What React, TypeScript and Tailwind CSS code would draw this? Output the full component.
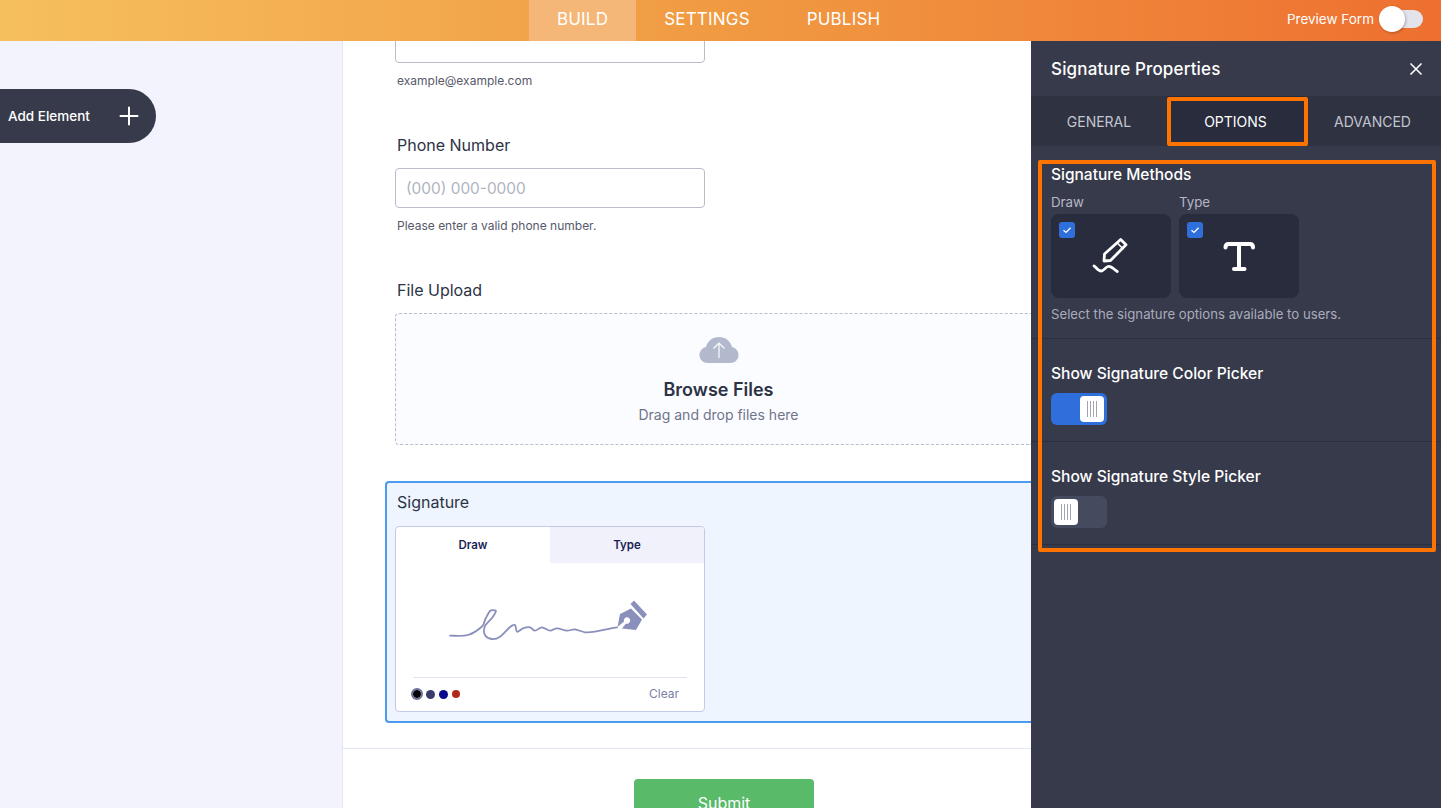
import React from "react";

function Grip() {
  return (
    <span className="flex gap-[2px]">
      <span className="w-px h-[16px] bg-[#a0a4b4]" />
      <span className="w-px h-[16px] bg-[#a0a4b4]" />
      <span className="w-px h-[16px] bg-[#a0a4b4]" />
      <span className="w-px h-[16px] bg-[#a0a4b4]" />
    </span>
  );
}

function Check() {
  return (
    <span className="flex items-center justify-center w-[16px] h-[16px] rounded-[3px] bg-[#2f6fdc]">
      <svg width="10" height="10" viewBox="0 0 10 10" fill="none">
        <path d="M1.5 5.2 4 7.4 8.6 2.8" stroke="#fff" strokeWidth="1.3" />
      </svg>
    </span>
  );
}

function PencilIcon() {
  return (
    <svg width="40" height="40" viewBox="0 0 40 40" fill="none" stroke="#fff" strokeWidth="2.800" strokeLinecap="round" strokeLinejoin="round">
      <path d="M29.700 3.500 35 8.800 19.500 24.500 13 25 13.500 18Z" />
      <path d="M26 6.800 32 12.800" strokeWidth="1.500" />
      <path d="M3 30C5 31 7 35 10 35 13 35 14.500 31 17 30.500 20 29.500 23 33.500 26.300 35.500" />
    </svg>
  );
}

function TIcon() {
  return (
    <svg width="40" height="40" viewBox="0 0 40 40" fill="none" stroke="#fff" strokeWidth="4" strokeLinecap="round" strokeLinejoin="round">
      <path d="M6.500 11.500Q6.500 8 9.500 8H31Q34 8 34 11.500" />
      <path d="M20 8V33" />
      <path d="M15 33H25.500" />
    </svg>
  );
}

const strokePoints: [number, number][] = [
  [15, 45.7], [33, 45], [47, 36.5], [50, 30], [55, 21], [60, 20.5], [60.7, 22], [57, 28], [50, 36], [50, 45],
  [57, 49], [65, 46.7], [75, 37], [80, 35], [82, 41.7], [88, 38.3], [95, 37.3], [100, 40.7], [107, 37.3],
  [115, 40.7], [122, 38.3], [132, 40.7], [140, 39.3], [150, 42.3], [160, 41.7], [182, 37.3],
];

function smoothPath(p: [number, number][]) {
  let d = `M${p[0][0]} ${p[0][1]}`;
  for (let i = 0; i < p.length - 1; i++) {
    const a = p[Math.max(i - 1, 0)];
    const b = p[i];
    const c = p[i + 1];
    const e = p[Math.min(i + 2, p.length - 1)];
    d += `C${b[0] + (c[0] - a[0]) / 6} ${b[1] + (c[1] - a[1]) / 6} ${c[0] - (e[0] - b[0]) / 6} ${c[1] - (e[1] - b[1]) / 6} ${c[0]} ${c[1]}`;
  }
  return d;
}

function SignatureDrawing() {
  return (
    <svg width="225" height="60" viewBox="0 0 225 60" fill="none">
      <path d={smoothPath(strokePoints)} stroke="#8a90bb" strokeWidth="1.800" strokeLinecap="round" />
      <path
        fillRule="evenodd"
        d="M182.500 37 185 24 196 18.500 207 29.500 201 40 187 38.500 191 33.500A3.200 3.200 0 1 0 189 31.500Z"
        fill="#8a90bb"
      />
      <path d="M199 10.500 212 24.500 208.500 28.500 195.500 14Z" fill="#8a90bb" />
    </svg>
  );
}

function CloudIcon() {
  return (
    <svg width="40" height="28" viewBox="0 0 40 28" fill="none">
      <path
        d="M9 27C4 27 0.500 23.500 0.500 19 0.500 15 3 12 7 11 8.500 5 13.500 1 20 1 26.500 1 31.500 5 33 11 37 12 39.500 15 39.500 19 39.500 23.500 36 27 31 27Z"
        fill="#b2b9cc"
      />
      <path d="M20 22V7M14.500 12.500 20 7 25.500 12.500" stroke="#fcfcff" strokeWidth="1.200" />
    </svg>
  );
}

export default function App() {
  return (
    <div className="h-[808px] w-full flex flex-col overflow-hidden font-['Inter',sans-serif] bg-[#f3f3fe]">
      <header className="h-[41px] shrink-0 relative flex items-center justify-center bg-gradient-to-r from-[#f6bf5d] via-[#f09a42] to-[#ee6f30]">
        <nav className="flex h-full text-[17px] text-white tracking-[0.2px] mr-[3px]">
          <div className="w-[107px] flex items-center justify-center pb-[1px] bg-[#f4b777]">BUILD</div>
          <div className="w-[142px] flex items-center justify-center pb-[1px]">SETTINGS</div>
          <div className="w-[131px] flex items-center justify-center pb-[1px]">PUBLISH</div>
        </nav>
        <div className="absolute right-[18px] top-[10px] flex items-center gap-[5px]">
          <span className="text-[13.500px] leading-[18px] text-white">Preview Form</span>
          <span className="relative w-[44px] h-[18px] rounded-full bg-[#e2e3eb]">
            <span className="absolute left-0 top-[-4px] w-[26px] h-[26px] rounded-full bg-white shadow-[1px_1px_3px_rgba(0,0,0,0.25)]" />
          </span>
        </div>
      </header>

      <div className="flex-1 flex min-h-0">
        <aside className="w-[342px] shrink-0 pt-[48px]">
          <div className="w-[156px] h-[54px] rounded-r-full bg-[#373a4b] flex items-center pl-[8px] text-white">
            <span className="text-[13.500px] font-medium">Add Element</span>
            <svg className="ml-[29px]" width="20" height="20" viewBox="0 0 20 20" stroke="#fff" strokeWidth="2" strokeLinecap="round">
              <path d="M10 1.500V18.500M1.500 10H18.500" />
            </svg>
          </div>
        </aside>

        <main className="w-[689px] shrink-0 bg-white border-l border-[#e4e5f2] overflow-hidden">
          <div className="mt-[-18px] pl-[43px]">
            <div className="w-[310px] h-[40px] ml-[9px] border border-[#b8bdc9] rounded-[4px] bg-white" />
            <p className="ml-[11px] mt-[10px] text-[12px] leading-[16px] text-[#57596a]">example@example.com</p>

            <p className="ml-[11px] mt-[46px] text-[16px] leading-[20px] text-[#2c3345]">Phone Number</p>
            <div className="ml-[9px] mt-[13px] w-[310px] h-[40px] border border-[#b8bdc9] rounded-[4px] bg-white flex items-center px-[10px] pt-[2px] text-[15.400px] text-[#b0b4bf]">
              (000) 000-0000
            </div>
            <p className="ml-[11px] mt-[10px] text-[12px] leading-[16px] text-[#57596a]">Please enter a valid phone number.</p>

            <p className="ml-[11px] mt-[46px] text-[16px] leading-[20px] text-[#2c3345]">File Upload</p>
            <div className="ml-[9px] mt-[13px] h-[132px] border border-dashed border-r-0 border-[#b8bdc9] rounded-l-[4px] bg-[#fbfcff] flex flex-col items-center pt-[22px] pl-[10px]">
              <CloudIcon />
              <p className="mt-[14px] text-[18px] leading-[24px] font-semibold text-[#2c3345]">Browse Files</p>
              <p className="mt-[3px] text-[14px] leading-[20px] text-[#6f7489]">Drag and drop files here</p>
            </div>

            <section className="ml-[-1px] mt-[36px] h-[242px] border-2 border-r-0 border-[#4c9bf0] rounded-l-[4px] bg-[#eef5ff] pl-[8px] pt-[9px]">
              <p className="ml-[2px] text-[16px] leading-[20px] text-[#2c3345]">Signature</p>
              <div className="mt-[14px] w-[310px] h-[186px] border border-[#c3c9e6] rounded-[4px] bg-white overflow-hidden flex flex-col">
                <div className="flex h-[36px] shrink-0 text-[11.500px] font-semibold text-[#1a1f55]">
                  <div className="w-[154px] flex items-center justify-center pt-[2px]">Draw</div>
                  <div className="flex-1 flex items-center justify-center pt-[2px] bg-[#f1f1fb]">Type</div>
                </div>
                <div className="ml-[39px] mt-[27px]">
                  <SignatureDrawing />
                </div>
                <div className="mx-[17px] mt-[27px] h-px w-[274px] bg-[#e1e3f0]" />
                <div className="flex items-center justify-between ml-[17px] mr-[25px] mt-[7px]">
                  <div className="flex items-center gap-[4px]">
                    <span className="w-[8px] h-[8px] rounded-full bg-black outline-2 outline-[#6b6f9c]" />
                    <span className="w-[9px] h-[9px] rounded-full ml-[1px] bg-[#3a3d6b]" />
                    <span className="w-[9px] h-[9px] rounded-full bg-[#0a0a8c]" />
                    <span className="w-[8px] h-[8px] rounded-full bg-[#b02a1c]" />
                  </div>
                  <span className="text-[12px] text-[#7c80a8]">Clear</span>
                </div>
              </div>
            </section>

            <div className="ml-[-43px] mt-[25px] h-px bg-[#e4e5f2]" />
            <div className="pt-[30px] pl-[248px]">
              <div className="w-[180px] h-[50px] rounded-[4px] bg-[#59ba6a] flex items-center justify-center pb-[3px] text-[16px] text-white">
                Submit
              </div>
            </div>
          </div>
        </main>

        <aside className="relative flex-1 bg-[#373a4b] text-white">
          <div className="h-[55px] flex items-center justify-between pl-[20px] pr-[18px]">
            <h2 className="text-[17px] pt-[2px] font-medium tracking-[0.15px]">Signature Properties</h2>
            <svg width="14" height="14" viewBox="0 0 14 14" stroke="#fff" strokeWidth="1.600">
              <path d="M1.500 1.500 12.500 12.500M12.500 1.500 1.500 12.500" />
            </svg>
          </div>
          <div className="h-[50px] flex bg-[#2f3241] text-[14px] text-[#c3c5d1]">
            <div className="w-[136px] flex items-center justify-center">GENERAL</div>
            <div className="w-[137px] flex items-center justify-center bg-[#292c3c] text-white">OPTIONS</div>
            <div className="flex-1 flex items-center justify-center">ADVANCED</div>
          </div>

          <div className="h-[193px] pt-[20px] px-[20px] border-b border-[#2c2f3e]">
            <h3 className="text-[15.500px] leading-[18px] font-medium">Signature Methods</h3>
            <div className="flex gap-[8px] mt-[10px]">
              <div>
                <p className="text-[13.300px] leading-[16px] text-[#b4b7c4]">Draw</p>
                <div className="relative mt-[4px] w-[120px] h-[84px] rounded-[8px] bg-[#292c3c] flex items-center justify-center">
                  <span className="absolute left-[8px] top-[8px]"><Check /></span>
                  <PencilIcon />
                </div>
              </div>
              <div>
                <p className="text-[13.300px] leading-[16px] text-[#b4b7c4]">Type</p>
                <div className="relative mt-[4px] w-[120px] h-[84px] rounded-[8px] bg-[#292c3c] flex items-center justify-center">
                  <span className="absolute left-[8px] top-[8px]"><Check /></span>
                  <TIcon />
                </div>
              </div>
            </div>
            <p className="mt-[8px] text-[13.200px] leading-[16px] text-[#a9acbb]">Select the signature options available to users.</p>
          </div>

          <div className="h-[103px] pt-[26px] px-[20px] border-b border-[#2c2f3e]">
            <h3 className="text-[15.600px] leading-[18px] font-medium">Show Signature Color Picker</h3>
            <div className="mt-[10px] w-[56px] h-[32px] rounded-[6px] bg-[#2f6fdc] flex items-center justify-end pr-[3px]">
              <span className="w-[24px] h-[26px] rounded-[4px] bg-white flex items-center justify-center"><Grip /></span>
            </div>
          </div>

          <div className="h-[103px] pt-[26px] px-[20px] border-b border-[#2c2f3e]">
            <h3 className="text-[15.600px] leading-[18px] font-medium">Show Signature Style Picker</h3>
            <div className="mt-[10px] w-[56px] h-[32px] rounded-[6px] bg-[#454a5e] flex items-center pl-[3px]">
              <span className="w-[24px] h-[26px] rounded-[4px] bg-white flex items-center justify-center"><Grip /></span>
            </div>
          </div>

          <div className="absolute left-[136px] top-[56px] w-[141px] h-[49px] border-[4px] border-[#ff7300] rounded-[2px]" />
          <div className="absolute left-[7px] top-[119px] w-[398px] h-[392px] border-[4px] border-[#ff7300] rounded-[2px]" />
        </aside>
      </div>
    </div>
  );
}
